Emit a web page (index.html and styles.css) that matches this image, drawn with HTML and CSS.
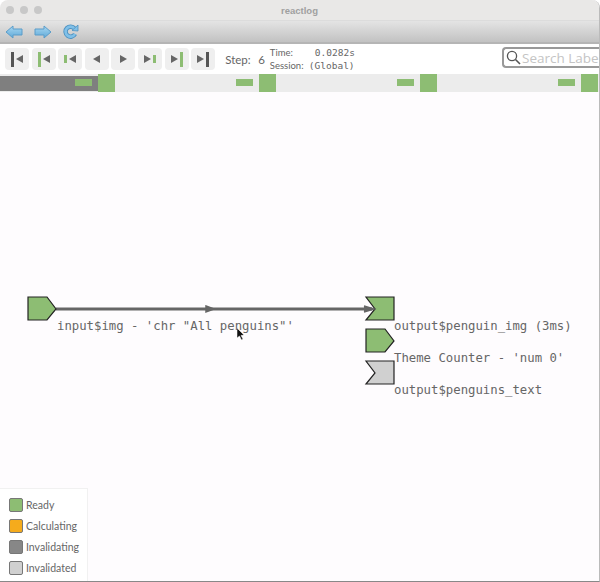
FILE: index.html
```html
<!DOCTYPE html>
<html lang="en">
<head>
    <meta charset="UTF-8">
    <title>reactlog</title>
    <link rel="stylesheet" href="styles.css">
</head>
<body>
<div class="window">
    <div class="titlebar">
        <div class="lights"><span></span><span></span><span></span></div>
        <div class="title">reactlog</div>
    </div>
    <div class="toolbar">
        <svg class="tool" width="18" height="14" viewBox="0 0 18 14">
            <defs><linearGradient id="blue" x1="0" y1="0" x2="0" y2="1"><stop offset="0" stop-color="#a9d8f2"/><stop offset="1" stop-color="#5fa9d8"/></linearGradient></defs>
            <path d="M1 7 L8 1 V4 H17 V10 H8 V13 Z" fill="url(#blue)" stroke="#5b9cc9"/>
        </svg>
        <svg class="tool" width="18" height="14" viewBox="0 0 18 14"><path d="M17 7 L10 1 V4 H1 V10 H10 V13 Z" fill="url(#blue)" stroke="#5b9cc9"/></svg>
        <svg class="tool" width="16" height="15" viewBox="0 0 16 15"><path d="M11.500 4.500 A5 5 0 1 0 12 10" fill="none" stroke="#4f93c2" stroke-width="4.500"/><path d="M11.500 4.500 A5 5 0 1 0 12 10" fill="none" stroke="#80c0e8" stroke-width="2.600"/><path d="M9 6.500 L15 7 L15 1 Z" fill="#80c0e8" stroke="#4f93c2" stroke-width=".8"/></svg>
    </div>
    <div class="controls">
        <div class="buttons">
            <button class="step"><i class="bar dark"></i><i class="tri left"></i></button>
            <button class="step"><i class="bar green"></i><i class="tri left"></i></button>
            <button class="step"><i class="bar green short"></i><i class="tri left"></i></button>
            <button class="step"><i class="tri left"></i></button>
            <button class="step"><i class="tri right"></i></button>
            <button class="step"><i class="tri right"></i><i class="bar green short"></i></button>
            <button class="step"><i class="tri right"></i><i class="bar green"></i></button>
            <button class="step"><i class="tri right"></i><i class="bar dark"></i></button>
        </div>
        <div class="step-label"><span class="step-key">Step:</span><span>6</span></div>
        <div class="meta">
            <div class="meta-row"><span class="meta-key">Time:</span><span class="meta-val time">0.0282s</span></div>
            <div class="meta-row"><span class="meta-key">Session:</span><span class="meta-val">(Global)</span></div>
        </div>
        <div class="search">
            <svg width="15" height="15" viewBox="0 0 15 15"><circle cx="6" cy="6" r="4.600" fill="none" stroke="#555" stroke-width="1.300"/><path d="M9.500 9.500 L14 14" stroke="#555" stroke-width="1.600"/></svg>
            <span>Search Labe</span>
        </div>
    </div>
    <div class="timeline">
        <div class="past"></div>
        <div class="tick" style="left: 75px"></div>
        <div class="mark" style="left: 98px"></div>
        <div class="tick" style="left: 236px"></div>
        <div class="mark" style="left: 259px"></div>
        <div class="tick" style="left: 397px"></div>
        <div class="mark" style="left: 420px"></div>
        <div class="tick" style="left: 558px"></div>
        <div class="mark" style="left: 581px"></div>
    </div>
    <div class="canvas">
        <svg class="graph" width="600" height="490" viewBox="0 92 600 490">
            <path d="M56 309 H372" stroke="#666" stroke-width="3"/>
            <path d="M206 306 L214 309 L206 312 Z" fill="#666" stroke="#666" stroke-width="1.500"/>
            <path d="M28 297 H47 L56 309 L47 320 H28 Z" fill="#8dbd73" stroke="#222" stroke-width="1.200"/>
            <path d="M366 297 H394 V320 H366 L375 309 Z" fill="#8dbd73" stroke="#222" stroke-width="1.200"/>
            <path d="M364 306 L374 309 L364 312" fill="#666" stroke="#666" stroke-width="1.500"/>
            <path d="M366 329 H385 L394 341 L385 352 H366 Z" fill="#8dbd73" stroke="#222" stroke-width="1.200"/>
            <path d="M366 361 H394 V384 H366 L375 373 Z" fill="#d0d0d0" stroke="#222" stroke-width="1.200"/>
            <path d="M237 328 V338 L239.500 336 L241.500 340 L243 339 L241 335.500 L244 335 Z" fill="#111" stroke="#fff" stroke-width=".5"/>
        </svg>
        <div class="label" style="left: 57px; top: 227px">input$img - 'chr "All penguins"'</div>
        <div class="label" style="left: 394px; top: 227px">output$penguin_img (3ms)</div>
        <div class="label" style="left: 394px; top: 259px">Theme Counter - 'num 0'</div>
        <div class="label" style="left: 394px; top: 291px">output$penguins_text</div>
        <div class="legend">
            <div class="legend-row"><i class="swatch ready"></i>Ready</div>
            <div class="legend-row"><i class="swatch calculating"></i>Calculating</div>
            <div class="legend-row"><i class="swatch invalidating"></i>Invalidating</div>
            <div class="legend-row"><i class="swatch invalidated"></i>Invalidated</div>
        </div>
    </div>
</div>
</body>
</html>
```

FILE: styles.css
```css
html, body {
    margin: 0;
    padding: 0;
    background-color: #fff;
}

.window {
    width: 599px;
    height: 581px;
    border-radius: 8px 8px 0 0;
    border-right: 1px solid #bbb;
    border-bottom: 1px solid #888;
    overflow: hidden;
    font-family: "Lato", sans-serif;
    display: flex;
    flex-direction: column;
    background-color: #fefcfe;
}

.titlebar {
    height: 20px;
    flex: none;
    background-color: #e9e8e7;
    border-bottom: 1px solid #dcdcdc;
    display: flex;
    align-items: center;
    position: relative;
}

.lights {
    display: flex;
    gap: 6px;
    margin-left: 6px;
}

.lights span {
    width: 8px;
    height: 8px;
    border-radius: 50%;
    background-color: #c8c8c8;
}

.title {
    position: absolute;
    left: 0;
    right: 0;
    text-align: center;
    font-family: "Liberation Sans", sans-serif;
    font-size: 9.500px;
    font-weight: bold;
    color: #a0a0a0;
}

.toolbar {
    height: 21px;
    flex: none;
    background: linear-gradient(#e4e4e4, #c2c2c2);
    border-bottom: 2px solid #b5b5b5;
    display: flex;
    align-items: center;
    gap: 11px;
    padding-left: 5px;
}

.controls {
    height: 30px;
    flex: none;
    background-color: #fff;
    display: flex;
    align-items: center;
    position: relative;
}

.buttons {
    display: flex;
    gap: 2.600px;
    margin-left: 5px;
}

.step {
    width: 24px;
    height: 22px;
    padding: 0;
    border: none;
    border-radius: 4px;
    background-color: #efefef;
    display: flex;
    align-items: center;
    justify-content: center;
    gap: 2px;
}

.bar {
    width: 3px;
    height: 15px;
}

.bar.short {
    height: 8px;
}

.bar.dark {
    background-color: #555;
}

.bar.green {
    background-color: #8dbd73;
}

.tri {
    width: 0;
    height: 0;
    border-top: 4.500px solid transparent;
    border-bottom: 4.500px solid transparent;
}

.tri.left {
    border-right: 7px solid #666;
}

.tri.right {
    border-left: 7px solid #666;
}

.step-label {
    display: flex;
    margin-left: 10px;
    font-size: 11.500px;
    color: #666;
}

.step-key {
    width: 33px;
}

.meta {
    margin-left: 5px;
    color: #666;
    line-height: 13px;
}

.meta-row {
    display: flex;
}

.meta-key {
    font-size: 9.500px;
    width: 39px;
}

.meta-val {
    font-family: "DejaVu Sans Mono", monospace;
    font-size: 9.500px;
}

.meta-val.time {
    margin-left: 6px;
}

.search {
    position: absolute;
    left: 502px;
    top: 3px;
    width: 98px;
    height: 21px;
    box-sizing: border-box;
    border: 2px solid #999;
    border-right: none;
    border-radius: 4px 0 0 4px;
    background-color: #fff;
    display: flex;
    align-items: center;
    gap: 1px;
    padding-left: 2px;
    font-family: "Open Sans", sans-serif;
    font-size: 13.500px;
    color: #c4c4c4;
    white-space: nowrap;
}

.timeline {
    height: 18px;
    flex: none;
    background-color: #ececec;
    position: relative;
    overflow: hidden;
}

.past {
    position: absolute;
    left: 0;
    top: 2px;
    width: 98px;
    height: 15px;
    background-color: #7f7f7f;
}

.tick {
    position: absolute;
    top: 5px;
    width: 17px;
    height: 7px;
    background-color: #8dbd73;
}

.mark {
    position: absolute;
    top: 0;
    width: 17px;
    height: 18px;
    background-color: #8dbd73;
}

.canvas {
    flex: 1;
    position: relative;
}

.graph {
    position: absolute;
    left: 0;
    top: 0;
}

.label {
    position: absolute;
    font-family: "DejaVu Sans Mono", monospace;
    font-size: 12.300px;
    line-height: 15px;
    color: #666;
    white-space: pre;
}

.legend {
    position: absolute;
    left: 0;
    bottom: 0;
    width: 88px;
    height: 93px;
    box-sizing: border-box;
    border-top: 1px solid #f1f1f1;
    border-right: 1px solid #f1f1f1;
    background-color: #fff;
    padding-top: 9px;
    display: flex;
    flex-direction: column;
    gap: 7px;
}

.legend-row {
    display: flex;
    align-items: center;
    gap: 3px;
    height: 14px;
    padding-left: 9px;
    font-size: 10.500px;
    color: #666;
}

.swatch {
    width: 12px;
    height: 12px;
    border: 1px solid #777;
    border-radius: 2px;
}

.ready {
    background-color: #8dbd73;
}

.calculating {
    background-color: #f5ab1c;
}

.invalidating {
    background-color: #878787;
}

.invalidated {
    background-color: #d0d0d0;
}
```
